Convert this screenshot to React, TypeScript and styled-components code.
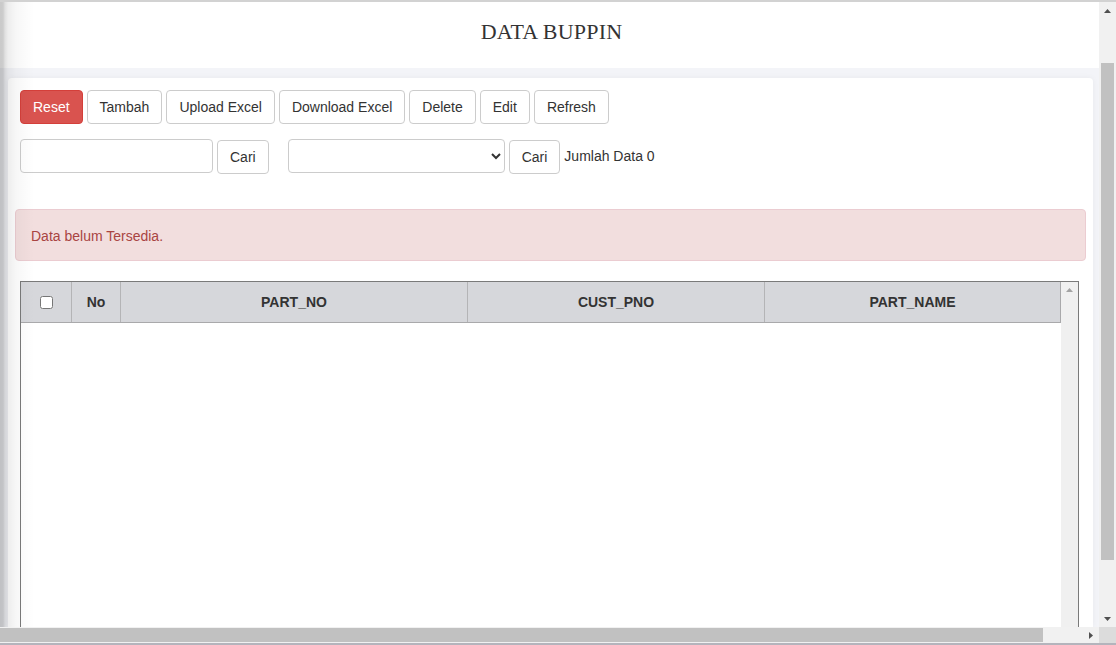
import React from "react";
import styled, { createGlobalStyle } from "styled-components";

const Global = createGlobalStyle`
  html, body { margin: 0; padding: 0; width: 1116px; height: 645px; overflow: hidden; background: #fff; }
  body { font-family: "Liberation Sans", Arial, sans-serif; font-size: 14px; color: #333; }
  * { box-sizing: border-box; }
`;

const Frame = styled.div`
  display: flex;
  flex-direction: column;
  width: 1116px;
  height: 645px;
`;

const TopLine = styled.div`
  flex: none;
  height: 2px;
  background: #d2d2d2;
`;

const Middle = styled.div`
  flex: none;
  display: flex;
  height: 625px;
`;

const Viewport = styled.div`
  position: relative;
  flex: 1;
  min-width: 0;
  display: flex;
  flex-direction: column;
  background: #f3f4f8;
  overflow: hidden;
  &::before {
    content: "";
    position: absolute;
    left: 0;
    top: 0;
    bottom: 0;
    width: 34px;
    pointer-events: none;
    z-index: 2;
    background: linear-gradient(
      to right,
      rgba(0, 0, 0, 0.21) 0,
      rgba(0, 0, 0, 0.2) 3px,
      rgba(0, 0, 0, 0.12) 5px,
      rgba(0, 0, 0, 0.07) 8px,
      rgba(0, 0, 0, 0.03) 16px,
      rgba(0, 0, 0, 0) 34px
    );
  }
`;

const Header = styled.header`
  flex: none;
  height: 66px;
  background: #fff;
  display: flex;
  justify-content: center;
  padding: 17px 0 0 4px;
`;

const Title = styled.h1`
  margin: 0;
  font-family: "Liberation Serif", "Times New Roman", serif;
  font-weight: normal;
  font-size: 22px;
  line-height: 26px;
  color: #333;
  letter-spacing: 0.2px;
`;

const Card = styled.main`
  flex: 1;
  min-height: 0;
  margin: 10px 6px 0 8px;
  background: #fff;
  border-radius: 4px 4px 0 0;
  box-shadow: 0 0 6px rgba(0, 0, 0, 0.05);
  padding: 7px 7px 0;
  display: flex;
  flex-direction: column;
  overflow: hidden;
`;

const Toolbar = styled.div`
  flex: none;
  padding: 5px 5px 35px;
  display: flex;
  flex-direction: column;
  gap: 15px;
`;

const Row = styled.div<{ $gap?: number }>`
  display: flex;
  align-items: flex-start;
  gap: ${(p) => p.$gap ?? 4}px;
`;

const Group = styled.div`
  display: flex;
  align-items: flex-start;
  gap: 4px;
`;

const Button = styled.button<{ $danger?: boolean; $drop?: number }>`
  height: 34px;
  margin-top: ${(p) => p.$drop ?? 0}px;
  padding: 6px 12px;
  font-family: "Liberation Sans", Arial, sans-serif;
  font-size: 14px;
  line-height: 20px;
  border-radius: 4px;
  border: 1px solid ${(p) => (p.$danger ? "#d43f3a" : "#ccc")};
  background: ${(p) => (p.$danger ? "#d9534f" : "#fff")};
  color: ${(p) => (p.$danger ? "#fff" : "#333")};
  cursor: pointer;
`;

const TextInput = styled.input`
  width: 193px;
  height: 34px;
  border: 1px solid #ccc;
  border-radius: 4px;
  padding: 6px 12px;
  font-family: "Liberation Sans", Arial, sans-serif;
  font-size: 14px;
  background: #fff;
`;

const Select = styled.select`
  width: 217px;
  height: 34px;
  border: 1px solid #ccc;
  border-radius: 4px;
  padding: 6px 8px;
  font-family: "Liberation Sans", Arial, sans-serif;
  font-size: 14px;
  background: #fff;
  color: #333;
`;

const Count = styled.span`
  font-size: 14px;
  line-height: 20px;
  color: #333;
  padding-top: 7px;
`;

const Alert = styled.div`
  flex: none;
  height: 52px;
  padding: 16px 15px 14px;
  line-height: 20px;
  background: #f2dede;
  border: 1px solid #ebccd1;
  border-radius: 4px;
  color: #a94442;
  font-size: 14px;
`;

const TableBox = styled.div`
  flex: 1;
  min-height: 400px;
  margin: 20px 7px 0 5px;
  border: 1px solid #7a7a7a;
  border-bottom: none;
  display: flex;
`;

const TableArea = styled.div`
  flex: 1;
  min-width: 0;
  display: flex;
  flex-direction: column;
`;

const HeadRow = styled.div`
  flex: none;
  display: grid;
  grid-template-columns: 50px 49px 347px 297px 1fr;
  height: 41px;
  background: #d6d7db;
  border-bottom: 1px solid #a9a9ab;
  border-right: 1px solid #a9a9ab;
`;

const HeadCell = styled.div<{ $first?: boolean }>`
  display: flex;
  align-items: center;
  justify-content: center;
  font-weight: bold;
  font-size: 14px;
  color: #333;
  border-left: ${(p) => (p.$first ? "none" : "1px solid #b4b4b6")};
`;

const Check = styled.input`
  width: 13px;
  height: 13px;
  margin: 0;
`;

const TableBody = styled.div`
  flex: 1;
  background: #fff;
`;

const InnerScroll = styled.div`
  flex: none;
  width: 17px;
  background: #f0f0f0;
  display: flex;
  justify-content: center;
  padding-top: 6px;
`;

const VScroll = styled.div`
  flex: none;
  width: 17px;
  background: #f1f1f1;
  display: flex;
  flex-direction: column;
  align-items: center;
`;

const ArrowBox = styled.div`
  flex: none;
  height: 17px;
  width: 17px;
  display: flex;
  align-items: center;
  justify-content: center;
`;

const VThumb = styled.div`
  flex: none;
  width: 13px;
  height: 497px;
  margin-top: 44px;
  background: #c1c1c1;
`;

const Spacer = styled.div`
  flex: 1;
`;

const BottomBar = styled.div`
  flex: none;
  display: flex;
  height: 16px;
`;

const HScroll = styled.div`
  flex: 1;
  display: flex;
  align-items: center;
  background: #f1f1f1;
`;

const HThumb = styled.div`
  width: 1043px;
  height: 14px;
  background: #c1c1c1;
`;

const Corner = styled.div`
  width: 17px;
  background: #dcdcdc;
`;

const BottomLine = styled.div`
  flex: none;
  height: 2px;
  background: #b4b4bc;
`;

const Tri = ({ dir, color }: { dir: "up" | "down" | "right"; color: string }) => {
  const pts =
    dir === "up" ? "0,4 3.5,0 7,4" : dir === "down" ? "0,0 7,0 3.5,4" : "0,0 4,3.5 0,7";
  const w = dir === "right" ? 4 : 7;
  const h = dir === "right" ? 7 : 4;
  return (
    <svg width={w} height={h} viewBox={`0 0 ${w} ${h}`}>
      <polygon points={pts} fill={color} />
    </svg>
  );
};

const buttons = ["Tambah", "Upload Excel", "Download Excel", "Delete", "Edit", "Refresh"];
const columns = ["No", "PART_NO", "CUST_PNO", "PART_NAME"];

export default function App() {
  return (
    <>
      <Global />
      <Frame>
        <TopLine />
        <Middle>
          <Viewport>
            <Header>
              <Title>DATA BUPPIN</Title>
            </Header>
            <Card>
              <Toolbar>
                <Row>
                  <Button $danger>Reset</Button>
                  {buttons.map((b) => (
                    <Button key={b}>{b}</Button>
                  ))}
                </Row>
                <Row $gap={19}>
                  <Group>
                    <TextInput type="text" />
                    <Button $drop={1}>Cari</Button>
                  </Group>
                  <Group>
                    <Select defaultValue="">
                      <option value=""></option>
                    </Select>
                    <Button $drop={1}>Cari</Button>
                    <Count>Jumlah Data 0</Count>
                  </Group>
                </Row>
              </Toolbar>
              <Alert>Data belum Tersedia.</Alert>
              <TableBox>
                <TableArea>
                  <HeadRow>
                    <HeadCell $first>
                      <Check type="checkbox" />
                    </HeadCell>
                    {columns.map((c) => (
                      <HeadCell key={c}>{c}</HeadCell>
                    ))}
                  </HeadRow>
                  <TableBody />
                </TableArea>
                <InnerScroll>
                  <Tri dir="up" color="#a3a3a3" />
                </InnerScroll>
              </TableBox>
            </Card>
          </Viewport>
          <VScroll>
            <ArrowBox>
              <Tri dir="up" color="#505050" />
            </ArrowBox>
            <VThumb />
            <Spacer />
            <ArrowBox>
              <Tri dir="down" color="#505050" />
            </ArrowBox>
          </VScroll>
        </Middle>
        <BottomBar>
          <HScroll>
            <HThumb />
            <Spacer />
            <ArrowBox>
              <Tri dir="right" color="#505050" />
            </ArrowBox>
          </HScroll>
          <Corner />
        </BottomBar>
        <BottomLine />
      </Frame>
    </>
  );
}
